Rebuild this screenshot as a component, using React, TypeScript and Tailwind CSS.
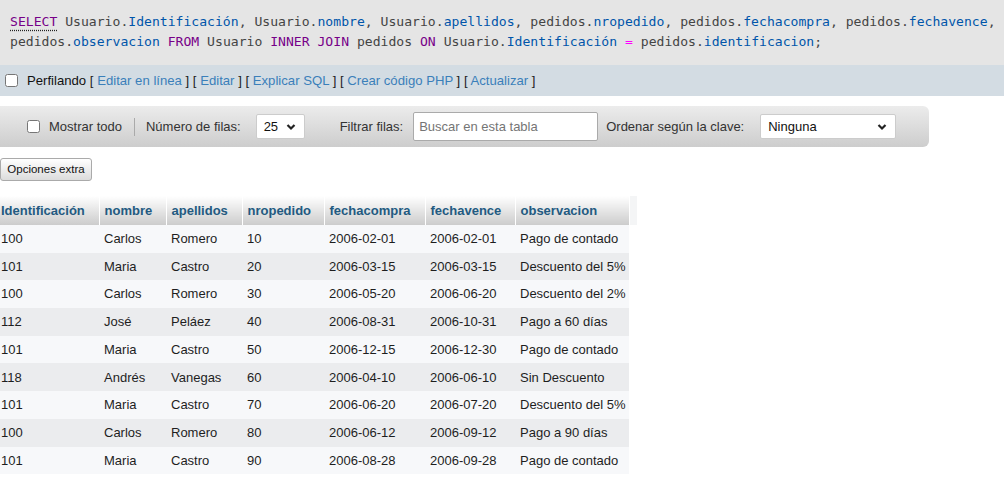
import { FC } from "react";

const rows = [
  ["100", "Carlos", "Romero", "10", "2006-02-01", "2006-02-01", "Pago de contado"],
  ["101", "Maria", "Castro", "20", "2006-03-15", "2006-03-15", "Descuento del 5%"],
  ["100", "Carlos", "Romero", "30", "2006-05-20", "2006-06-20", "Descuento del 2%"],
  ["112", "José", "Peláez", "40", "2006-08-31", "2006-10-31", "Pago a 60 días"],
  ["101", "Maria", "Castro", "50", "2006-12-15", "2006-12-30", "Pago de contado"],
  ["118", "Andrés", "Vanegas", "60", "2006-04-10", "2006-06-10", "Sin Descuento"],
  ["101", "Maria", "Castro", "70", "2006-06-20", "2006-07-20", "Descuento del 5%"],
  ["100", "Carlos", "Romero", "80", "2006-06-12", "2006-09-12", "Pago a 90 días"],
  ["101", "Maria", "Castro", "90", "2006-08-28", "2006-09-28", "Pago de contado"],
];

const headers = ["Identificación", "nombre", "apellidos", "nropedido", "fechacompra", "fechavence", "observacion"];
const widths = [99, 67, 76, 82, 101, 90, 114];

const Kw: FC<{ children: string }> = ({ children }) => <span className="text-[#770088]">{children}</span>;
const Vr: FC<{ children: string }> = ({ children }) => <span className="text-[#0055aa]">{children}</span>;

const Chevron: FC = () => (
  <svg width="10" height="7" viewBox="0 0 10 7" className="absolute right-[8px] top-1/2 -translate-y-1/2">
    <path d="M1.5 1.5 L5 5 L8.5 1.5" fill="none" stroke="#222" strokeWidth="2.2" />
  </svg>
);

const Link: FC<{ children: string }> = ({ children }) => (
  <>
    <span className="text-[#222]">[ </span>
    <span className="text-[#3a7fba]">{children}</span>
    <span className="text-[#222]"> ]</span>
  </>
);

export default function App() {
  return (
    <div className="w-[1004px] h-[487px] bg-white overflow-hidden font-['Liberation_Sans',Arial,sans-serif] text-[13px]">
      <div className="h-[65px] bg-[#e5e5e5] pl-[10px] pt-[12px] font-['DejaVu_Sans_Mono',monospace] text-[13.1px] leading-[20px] text-[#444] whitespace-nowrap">
        <div>
          <span className="text-[#770088] underline decoration-dotted decoration-[#222] underline-offset-[4px]">SELECT</span> Usuario.<Vr>Identificación</Vr>, Usuario.<Vr>nombre</Vr>, Usuario.<Vr>apellidos</Vr>, pedidos.<Vr>nropedido</Vr>, pedidos.<Vr>fechacompra</Vr>, pedidos.<Vr>fechavence</Vr>,
        </div>
        <div>
          pedidos.<Vr>observacion</Vr> <Kw>FROM</Kw> Usuario <Kw>INNER JOIN</Kw> pedidos <Kw>ON</Kw> Usuario.<Vr>Identificación</Vr> <span className="text-[#ff00ff]">=</span> pedidos.<Vr>identificacion</Vr>;
        </div>
      </div>

      <div className="h-[31px] bg-[#d3dce3] flex items-center pl-[5px] text-[13.15px]">
        <input type="checkbox" className="w-[13px] h-[13px] m-0 mr-[9px]" />
        <span className="text-[#111] whitespace-pre">
          Perfilando <Link>Editar en línea</Link> <Link>Editar</Link> <Link>Explicar SQL</Link> <Link>Crear código PHP</Link> <Link>Actualizar</Link>
        </span>
      </div>

      <div className="mt-[10px] w-[929px] h-[41px] rounded-r-[6px] bg-gradient-to-b from-[#ececec] to-[#cdcdcd] flex items-center text-[#333] text-[13px]">
        <input type="checkbox" className="w-[13px] h-[13px] m-0 ml-[27px] mr-[9px]" />
        <span>Mostrar todo</span>
        <div className="w-px h-[18px] bg-[#aaa] ml-[12px] mr-[11px]" />
        <span>Número de filas:</span>
        <div className="relative ml-[15px] w-[49px] h-[25px] bg-white border border-[#ccc] rounded-[2px] flex items-center pl-[7px] text-[#111]">
          25
          <Chevron />
        </div>
        <span className="ml-[35px]">Filtrar filas:</span>
        <div className="ml-[10px] w-[185px] h-[29px] bg-white border border-[#aaa] rounded-[2px] flex items-center pl-[5px] text-[#757575]">
          Buscar en esta tabla
        </div>
        <span className="ml-[8px]">Ordenar según la clave:</span>
        <div className="relative ml-[16px] w-[136px] h-[25px] bg-white border border-[#ccc] rounded-[2px] flex items-center pl-[7px] text-[#111]">
          Ninguna
          <Chevron />
        </div>
      </div>

      <div className="mt-[11px]">
        <button className="h-[23px] w-[92px] border border-[#aaa] rounded-[3px] bg-gradient-to-b from-[#ffffff] to-[#dcdcdc] text-[11.5px] text-[#111] leading-none">
          Opciones extra
        </button>
      </div>

      <table className="mt-[15px] table-fixed border-collapse w-[637px] text-[13px]">
        <colgroup>
          {widths.map((w, i) => (
            <col key={i} style={{ width: w }} />
          ))}
          <col style={{ width: 8 }} />
        </colgroup>
        <thead>
          <tr className="h-[29px]">
            {headers.map((h, i) => (
              <th
                key={h}
                className={`text-left font-bold text-[#235a81] bg-gradient-to-b from-[#ffffff] to-[#cccccc] border-r border-white ${i === 0 ? "pl-[1px]" : "pl-[5px]"}`}
              >
                {h}
              </th>
            ))}
            <th className="bg-[#f4f5f6]" />
          </tr>
        </thead>
        <tbody>
          {rows.map((r, ri) => (
            <tr key={ri} className="h-[27.7px]">
              {r.map((c, ci) => (
                <td
                  key={ci}
                  className={`${ri % 2 === 0 ? "bg-[#f7f8fa]" : "bg-[#ebecee]"} text-[#1e1e1e] whitespace-nowrap ${ci === 0 ? "pl-[1px]" : "pl-[5px]"}`}
                >
                  {c}
                </td>
              ))}
              <td />
            </tr>
          ))}
        </tbody>
      </table>
    </div>
  );
}
